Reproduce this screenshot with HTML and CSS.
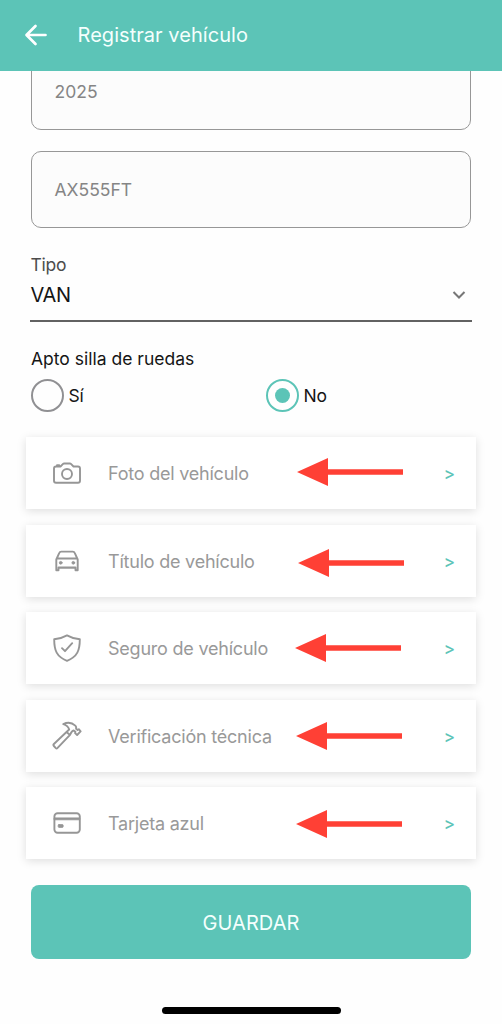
FILE: index.html
```html
<!DOCTYPE html>
<html lang="es">
<head>
<meta charset="utf-8">
<title>Registrar vehículo</title>
<link rel="stylesheet" href="styles.css">
</head>
<body>
<div class="app">
  <header class="topbar">
    <svg class="back" viewBox="0 0 24 24"><path d="M21.500 12H3M11.500 3L2.500 12l9 9"/></svg>
    <h1 class="title">Registrar vehículo</h1>
  </header>
  <main class="form">
    <div class="field field-year"><span class="year">2025</span></div>
    <div class="field field-plate"><span class="plate">AX555FT</span></div>
    <div class="select">
      <span class="select-label">Tipo</span>
      <div class="select-row">
        <span class="select-value">VAN</span>
        <svg class="chevron" viewBox="0 0 14 10"><path d="M1.500 2l5.500 5.500L12.500 2"/></svg>
      </div>
    </div>
    <div class="question">Apto silla de ruedas</div>
    <div class="radios">
      <div class="option"><span class="radio"></span><span class="si">Sí</span></div>
      <div class="option"><span class="radio checked"></span><span class="no">No</span></div>
    </div>
    <div class="cards">
      <div class="card">
        <svg class="icon" viewBox="0 0 32 32"><path d="M5 9.500h4.500l2.300-2.400q.6-.6 1.400-.6h5.600q.8 0 1.400.6l2.300 2.400H27q2 0 2 2v12.300q0 2-2 2H5q-2 0-2-2V11.500q0-2 2-2zM6 9v-.7h2.200V9"/><circle cx="16" cy="17" r="5"/></svg>
        <span class="label">Foto del vehículo</span><span class="more">&gt;</span>
        <svg class="arrow a1" viewBox="0 0 106 28"><path d="M0 14L31 0v11.300h75v5.400H31V28z"/></svg>
      </div>
      <div class="card">
        <svg class="icon" viewBox="0 0 32 32"><path d="M5.300 25.200V14.500l3-6.700q.5-1.200 1.900-1.200h11.600q1.400 0 1.900 1.200l3 6.700v10.700h-2.200v-2.400h-17v2.400zM7.500 22.500h17M6 13.500h20"/><circle class="solid" cx="9.700" cy="17.800" r="1.400"/><circle class="solid" cx="22.300" cy="17.800" r="1.400"/></svg>
        <span class="label">Título de vehículo</span><span class="more">&gt;</span>
        <svg class="arrow a2" viewBox="0 0 106 28"><path d="M0 14L31 0v11.300h75v5.400H31V28z"/></svg>
      </div>
      <div class="card">
        <svg class="icon" viewBox="0 0 32 32"><path d="M16 3.400Q10.500 6.600 3.200 7.300C3.200 18.500 5.500 24.500 16 28.800c10.500-4.300 12.800-10.300 12.800-21.500Q21.500 6.600 16 3.400zM11 16.200l3 3 7.200-8"/></svg>
        <span class="label">Seguro de vehículo</span><span class="more">&gt;</span>
        <svg class="arrow a3" viewBox="0 0 106 28"><path d="M0 14L31 0v11.300h75v5.400H31V28z"/></svg>
      </div>
      <div class="card">
        <svg class="icon" viewBox="0 0 32 32"><path d="M15.500 12L2.900 24q-1 1 0 2l1.700 1.900q1 1 2 0L19 14.900M15.500 12l2.700-2.500q-1.300-4.200-5.900-5.400Q19 .8 24.300 5.600q1.200 1.300.8 3.200l1.500 1.200 1.200-.8 1.800 2.200-3.500 3.600-2-1.900.3-1.400-1.700-1.300q-2 .6-3.700 4.500z"/></svg>
        <span class="label">Verificación técnica</span><span class="more">&gt;</span>
        <svg class="arrow a4" viewBox="0 0 106 28"><path d="M0 14L31 0v11.300h75v5.400H31V28z"/></svg>
      </div>
      <div class="card">
        <svg class="icon" viewBox="0 0 32 32"><rect x="3.400" y="6.300" width="25.400" height="19.400" rx="3.200"/><path class="solid" d="M3.400 10.900h25.400v1.900H3.400z"/><rect class="solid" x="7.200" y="17.600" width="5" height="2.800" rx=".8"/></svg>
        <span class="label">Tarjeta azul</span><span class="more">&gt;</span>
        <svg class="arrow a5" viewBox="0 0 106 28"><path d="M0 14L31 0v11.300h75v5.400H31V28z"/></svg>
      </div>
    </div>
    <button class="save" type="button"><span>GUARDAR</span></button>
  </main>
  <div class="home"></div>
</div>
</body>
</html>
```
FILE: styles.css
```css
* { box-sizing: border-box; }
body { margin: 0; background: #fefefe; font-family: Inter, "Liberation Sans", sans-serif; }
.app { width: 502px; height: 1024px; overflow: hidden; display: flex; flex-direction: column; }
.topbar { height: 71px; flex: none; background: #5cc4b7; color: #f4fffd; display: flex; align-items: center; padding: 0 0 1px 24px; gap: 29.500px; z-index: 1; }
.back { width: 24px; height: 24px; fill: none; stroke: #fff; stroke-width: 2.700; stroke-linecap: round; stroke-linejoin: round; }
.title { margin: 0; font-size: 20px; font-weight: 400; letter-spacing: .05px; white-space: nowrap; }
.form { flex: 1; min-height: 0; display: flex; flex-direction: column; padding: 0 31px; }
.field { flex: none; height: 77px; border: 1px solid #979797; border-radius: 10px; background: #fcfcfc; color: #858585; display: flex; align-items: center; padding-left: 22.500px; font-size: 17.500px; }
.field-year { margin-top: -18px; }
.field-plate { margin-top: 21px; }
.select { margin: 26px -1px 0; height: 68px; border-bottom: 2px solid #626262; padding-left: .5px; flex: none; }
.select-label { display: block; font-size: 17.500px; line-height: 22px; letter-spacing: -.25px; color: #4c4c4c; }
.select-row { display: flex; justify-content: space-between; align-items: center; height: 38px; padding-right: 6px; font-size: 20px; letter-spacing: -.4px; color: #151515; }
.chevron { width: 14px; height: 10px; fill: none; stroke: #777; stroke-width: 2; }
.question { margin-top: 26px; height: 22px; line-height: 22px; font-size: 17.500px; color: #151515; }
.radios { display: grid; grid-template-columns: 235px 1fr; margin-top: 9px; height: 33px; font-size: 17.500px; letter-spacing: -.3px; color: #151515; }
.option { display: flex; align-items: center; gap: 5px; }
.radio { width: 33px; height: 33px; margin-right: -.5px; border: 2.500px solid #909093; border-radius: 50%; display: flex; align-items: center; justify-content: center; }
.checked { border-color: #5cc4b7; }
.checked::after { content: ""; width: 15px; height: 15px; border-radius: 50%; background: #5cc4b7; }
.cards { display: grid; gap: 15.500px; margin: 25.300px -5px 0; }
.card { position: relative; height: 72px; background: #fff; box-shadow: 0 2px 9px rgba(0, 0, 0, .13); display: flex; align-items: center; padding: 0 21px 0 25px; }
.icon { width: 32px; height: 32px; fill: none; stroke: #969696; stroke-width: 1.900; stroke-linejoin: round; stroke-linecap: round; }
.icon .solid { fill: #969696; stroke-width: .8; }
.label { flex: 1; margin-left: 25px; padding-top: 1px; font-size: 18px; letter-spacing: -.22px; color: #999; white-space: nowrap; }
.more { padding-top: 2px; color: #5cc4b7; font-size: 17px; font-weight: 500; }
.arrow { position: absolute; width: 106px; height: 28px; fill: #ff4035; }
.a1 { left: 271px; top: 21px; }
.a2 { left: 271.500px; top: 24.500px; }
.a3 { left: 269px; top: 22px; }
.a4 { left: 269.500px; top: 22px; }
.a5 { left: 270px; top: 22.500px; }
.save { margin-top: 26px; height: 74px; flex: none; border: 0; border-radius: 8px; background: #5cc4b7; color: #f4fffd; font: 400 20px Inter, "Liberation Sans", sans-serif; letter-spacing: .1px; padding-top: 2px; }
.home { position: absolute; left: 162px; top: 1007px; width: 179px; height: 7px; border-radius: 4px; background: #000; }
```
